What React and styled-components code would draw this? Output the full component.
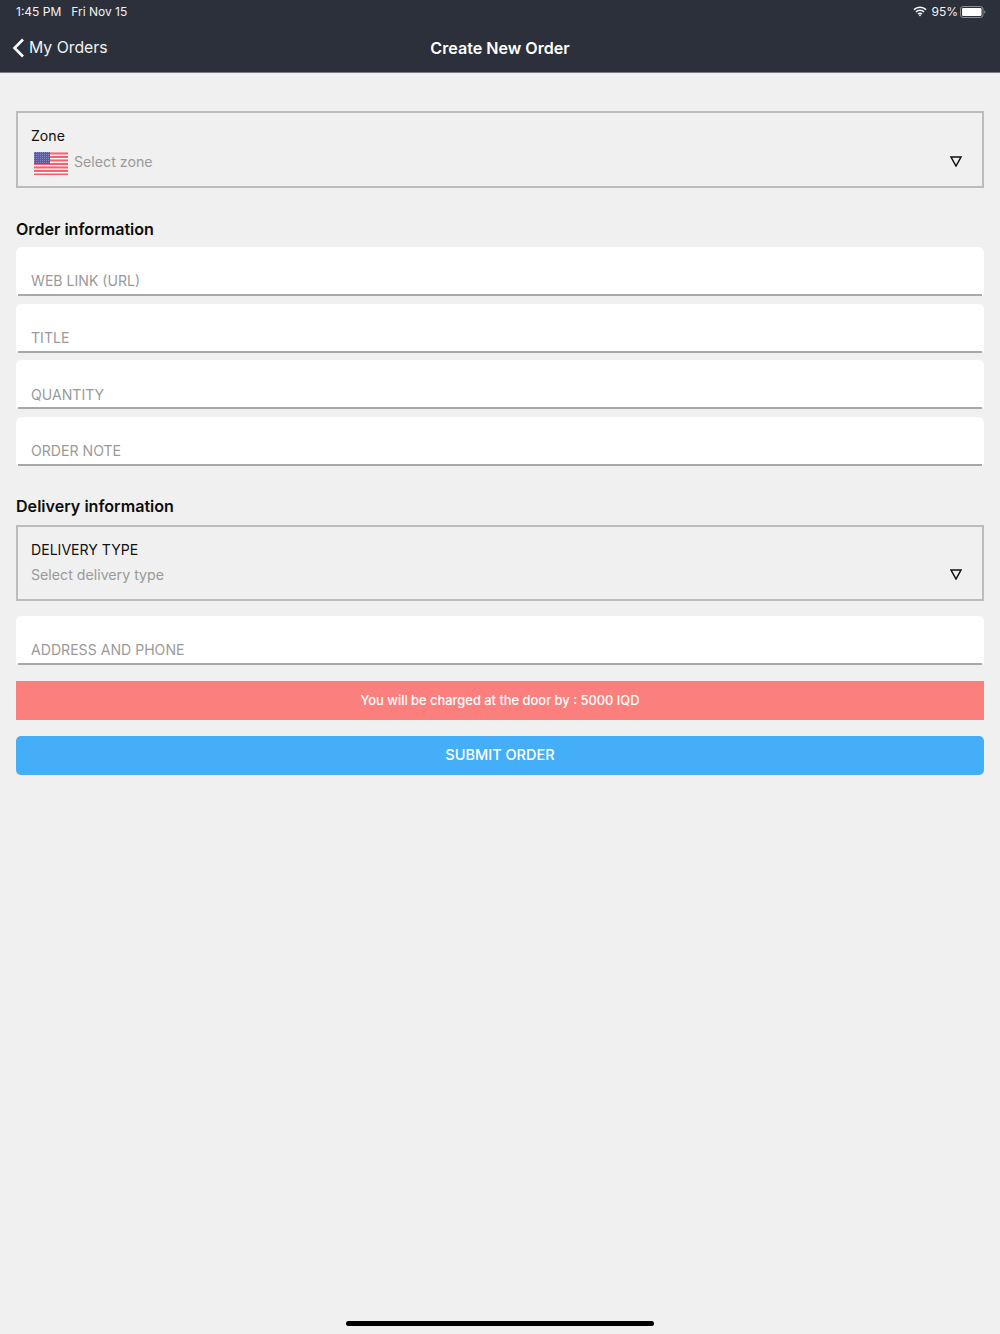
import React from "react";
import styled, { createGlobalStyle } from "styled-components";

const Global = createGlobalStyle`
  html, body { margin: 0; padding: 0; background: #f0f0f0; }
  * { box-sizing: border-box; }
  body { font-family: Inter, "Liberation Sans", sans-serif; }
`;
const Page = styled.div`
  position: relative; width: 1000px; height: 1334px; background: #f0f0f0; overflow: hidden;
`;
const Header = styled.header`
  height: 73px; background: #2c303b; color: #fff; display: flex; flex-direction: column;
  border-bottom: 1px solid #7a7d84;
`;
const StatusBar = styled.div`
  height: 23px; padding: 0 14px 0 16px; display: flex; align-items: center; justify-content: space-between;
  font-size: 12px; color: #f2f2f3;
`;
const StatusLeft = styled.div`display: flex; gap: 10px;`;
const StatusRight = styled.div`display: flex; align-items: center; gap: 2px;`;
const NavBar = styled.div`
  flex: 1; display: grid; grid-template-columns: 1fr auto 1fr; align-items: center;
`;
const Back = styled.div`display: flex; align-items: center; gap: 4px; margin-left: 12px; font-size: 15.8px; color: #f2f2f3;`;
const Title = styled.div`font-size: 16.1px; font-weight: 600; color: #fff;`;
const Content = styled.main`padding: 38px 16px 0; display: flex; flex-direction: column;`;
const Select = styled.div`
  height: ${p => p.$h}px; border: 2px solid #bcbcbc; padding: 14px 20px 0 13px;
  display: flex; flex-direction: column; gap: 5px;
`;
const SelectLabel = styled.div`font-size: 14.1px; line-height: 18px; color: #111;`;
const SelectRow = styled.div`display: flex; align-items: center; justify-content: space-between; height: 22px;`;
const SelectValue = styled.div`display: flex; align-items: center; gap: 6px; font-size: 14.2px; color: #9a9a9a;`;
const Flag = styled.svg`margin: 4px 0 0 3px; display: block;`;
const Heading = styled.h2`
  margin: 0; font-size: 16.1px; font-weight: 600; color: #0c0c0c; line-height: 20px; padding: ${p => p.$pad};
`;
const Field = styled.div`
  height: 49px; background: #fff; border-radius: 6px 6px 3px 3px; position: relative;
  margin: ${p => p.$mt ?? 0}px 0 ${p => p.$mb ?? 7.67}px;
  padding: 25.4px 15px 0; font-size: 14.1px; line-height: 18px; color: #9a9a9a;
  &::after { content: ""; position: absolute; left: 2px; right: 2px; bottom: 0; height: 2px; background: #a8a8a8; }
`;
const Notice = styled.div`
  height: 39px; background: #fb7f7d; color: #fff; font-size: 12.9px; font-weight: 500; display: flex;
  align-items: center; justify-content: center; margin-bottom: 16px;
`;
const Submit = styled.button`
  height: 39px; border: 0; border-radius: 5px; background: #45aef8; color: #fff; font: 500 14.5px Inter, sans-serif;
  padding: 0 0 2px; width: 100%;
`;
const HomeBar = styled.div`
  position: absolute; left: 346px; bottom: 8px; width: 308px; height: 5px; border-radius: 3px; background: #000;
`;

const Triangle = () => (
  <svg width="12" height="11" viewBox="0 0 12 11" aria-hidden="true">
    <path d="M1 1h10L6 10z" fill="none" stroke="#111" strokeWidth="1.5" />
  </svg>
);
const UsFlag = () => (
  <Flag width="34" height="23" viewBox="0 0 34 23" aria-hidden="true">
    <defs>
      <pattern id="stars" width="2" height="2" patternUnits="userSpaceOnUse">
        <rect width="2" height="2" fill="#565ca6" />
        <rect width="1" height="1" fill="#8487bf" />
      </pattern>
    </defs>
    <rect width="34" height="23" fill="#fff" />
    {Array.from({ length: 7 }, (_, i) => (
      <rect key={i} y={i * 3.5 + 0.4} width="34" height="2.1" fill="#fb5f6b" />
    ))}
    <rect width="16" height="12" fill="url(#stars)" />
  </Flag>
);
const Wifi = () => (
  <svg width="14" height="11" viewBox="0 0 14 11" aria-hidden="true" style={{ marginRight: 2 }}>
    <path d="M1 3.6a8.6 8.6 0 0 1 12 0M3 5.9a5.7 5.7 0 0 1 8 0M5 8a2.8 2.8 0 0 1 4 0" fill="none" stroke="#fff" strokeWidth="1.5" />
    <path d="M5.8 9 7 10.4 8.2 9a1.8 1.8 0 0 0-2.4 0z" fill="#fff" />
  </svg>
);
const Battery = () => (
  <svg width="26" height="12" viewBox="0 0 26 12" aria-hidden="true">
    <rect x=".5" y=".5" width="22.5" height="11" rx="2.6" fill="none" stroke="#8a8c93" />
    <rect x="2" y="2" width="19.5" height="8" rx="1.3" fill="#fff" />
    <path d="M24.2 4.5c.8.2 1.2.8 1.2 1.5s-.4 1.3-1.2 1.5z" fill="#8a8c93" />
  </svg>
);
const Chevron = () => (
  <svg width="13" height="20" viewBox="0 0 13 20" aria-hidden="true">
    <path d="M11 1.5 2.5 10l8.5 8.5" fill="none" stroke="#fff" strokeWidth="2.6" />
  </svg>
);

export default function App() {
  return (
    <Page>
      <Global />
      <Header>
        <StatusBar>
          <StatusLeft><span>1:45 PM</span><span>Fri Nov 15</span></StatusLeft>
          <StatusRight><Wifi /><span>95%</span><Battery /></StatusRight>
        </StatusBar>
        <NavBar>
          <Back><Chevron />My Orders</Back>
          <Title>Create New Order</Title>
          <span />
        </NavBar>
      </Header>
      <Content>
        <Select $h={77}>
          <SelectLabel>Zone</SelectLabel>
          <SelectRow>
            <SelectValue><UsFlag />Select zone</SelectValue>
            <Triangle />
          </SelectRow>
        </Select>
        <Heading $pad="31px 0 8px">Order information</Heading>
        <Field>WEB LINK (URL)</Field>
        <Field>TITLE</Field>
        <Field>QUANTITY</Field>
        <Field $mb={0}>ORDER NOTE</Field>
        <Heading $pad="30px 0 9px">Delivery information</Heading>
        <Select $h={76}>
          <SelectLabel>DELIVERY TYPE</SelectLabel>
          <SelectRow>
            <SelectValue>Select delivery type</SelectValue>
            <Triangle />
          </SelectRow>
        </Select>
        <Field $mt={15} $mb={16}>ADDRESS AND PHONE</Field>
        <Notice>You will be charged at the door by : 5000 IQD</Notice>
        <Submit>SUBMIT ORDER</Submit>
      </Content>
      <HomeBar />
    </Page>
  );
}
